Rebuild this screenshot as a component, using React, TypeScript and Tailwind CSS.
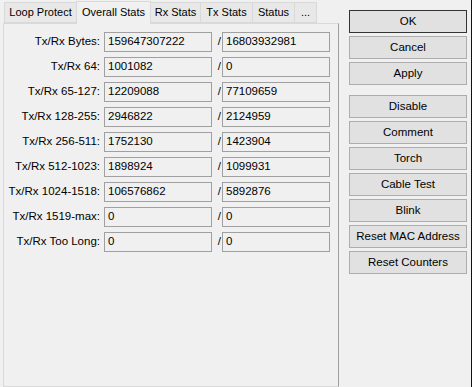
import React from 'react';

const tabs = [
  { label: 'Loop Protect', w: 'w-[73px]' },
  { label: 'Overall Stats', w: 'w-[75px]' },
  { label: 'Rx Stats', w: 'w-[51px]' },
  { label: 'Tx Stats', w: 'w-[53px]' },
  { label: 'Status', w: 'w-[43px]' },
  { label: '...', w: 'w-[23px]' },
];

const rows: [string, string, string][] = [
  ['Tx/Rx Bytes:', '159647307222', '16803932981'],
  ['Tx/Rx 64:', '1001082', '0'],
  ['Tx/Rx 65-127:', '12209088', '77109659'],
  ['Tx/Rx 128-255:', '2946822', '2124959'],
  ['Tx/Rx 256-511:', '1752130', '1423904'],
  ['Tx/Rx 512-1023:', '1898924', '1099931'],
  ['Tx/Rx 1024-1518:', '106576862', '5892876'],
  ['Tx/Rx 1519-max:', '0', '0'],
  ['Tx/Rx Too Long:', '0', '0'],
];

const buttons = ['Disable', 'Comment', 'Torch', 'Cable Test', 'Blink', 'Reset MAC Address', 'Reset Counters'];

function Btn({ label, primary }: { label: string; primary?: boolean }) {
  return (
    <button
      className={`h-[23px] w-full bg-[#e1e1e1] text-[11.5px] text-black leading-none whitespace-nowrap border ${
        primary ? 'border-[#333333]' : 'border-[#adadad]'
      }`}
    >
      {label}
    </button>
  );
}

export default function App() {
  return (
    <div
      className="w-[472px] h-[387px] bg-[#f0f0f0] flex overflow-hidden text-black"
      style={{ fontFamily: '"Liberation Sans", Arial, sans-serif' }}
    >
      {/* left: tab control */}
      <div className="w-[339px] pl-[3px] flex flex-col">
        <div className="flex items-end h-[23px] pl-[1px]">
          {tabs.map((t, i) =>
            i === 1 ? (
              <div
                key={t.label}
                className={`${t.w} h-[23px] pb-[2px] -mb-px -ml-px z-10 bg-[#f0f0f0] border border-b-0 border-[#d9d9d9] text-[11px] whitespace-nowrap flex items-center justify-center`}
              >
                {t.label}
              </div>
            ) : (
              <div
                key={t.label}
                className={`${t.w} h-[21px] bg-[#e8e8e8] border border-[#d9d9d9] -ml-px first:ml-0 text-[11px] whitespace-nowrap flex items-center justify-center`}
              >
                {t.label}
              </div>
            )
          )}
        </div>
        <div className="flex-1 border border-[#d9d9d9] border-r-[#a0a0a0] pt-[8px] flex flex-col gap-[5px]">
          {rows.map(([label, a, b]) => (
            <div key={label} className="flex items-center h-[20px] text-[11.5px]">
              <div className="w-[100px] text-right pr-[4px] whitespace-nowrap">{label}</div>
              <div className="w-[108px] h-[20px] border border-[#a0a0a0] flex items-center px-[3px]">{a}</div>
              <div className="w-[10px] text-right pr-[1px]">/</div>
              <div className="w-[108px] h-[20px] border border-[#a0a0a0] flex items-center px-[3px]">{b}</div>
            </div>
          ))}
        </div>
      </div>
      {/* right: buttons */}
      <div className="flex-1 pl-[10px] pr-[4px] pt-[10px] border-r border-[#111111]">
        <div className="flex flex-col gap-[3px]">
          <Btn label="OK" primary />
          <Btn label="Cancel" />
          <Btn label="Apply" />
        </div>
        <div className="flex flex-col gap-[3px] mt-[10px]">
          {buttons.map((b) => (
            <Btn key={b} label={b} />
          ))}
        </div>
      </div>
    </div>
  );
}
